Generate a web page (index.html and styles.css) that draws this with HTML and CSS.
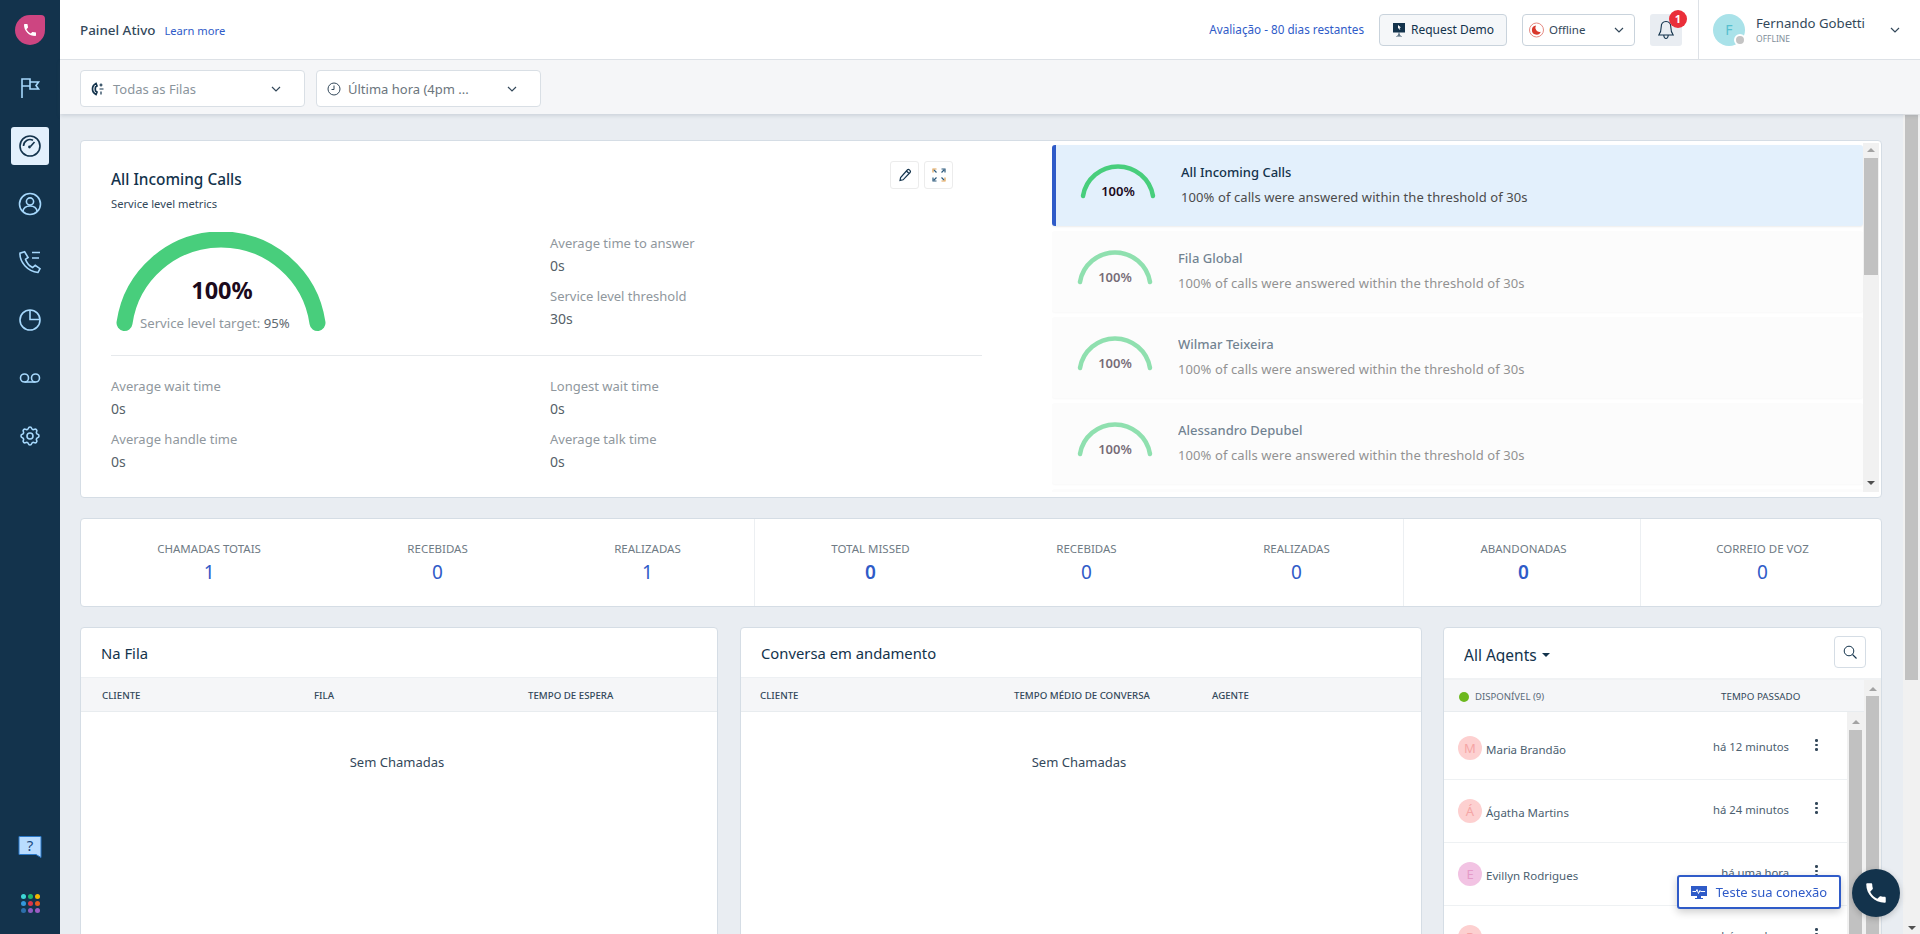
FILE: index.html
```html
<!DOCTYPE html>
<html lang="pt">
<head>
<meta charset="utf-8">
<title>Painel Ativo</title>
<link rel="stylesheet" href="styles.css">
</head>
<body>
<div class="app">
  <aside class="sidebar">
    <div class="logo">
      <svg width="16" height="16" viewBox="0 0 24 24"><path fill="#fff" d="M6.62 10.79c1.44 2.83 3.76 5.14 6.59 6.59l2.2-2.2c.27-.27.67-.36 1.02-.24 1.12.37 2.33.57 3.57.57.55 0 1 .45 1 1V20c0 .55-.45 1-1 1-9.39 0-17-7.61-17-17 0-.55.45-1 1-1h3.5c.55 0 1 .45 1 1 0 1.25.2 2.45.57 3.57.11.35.03.74-.25 1.02l-2.2 2.2z"/></svg>
    </div>
    <nav class="nav">
      <a class="nav-item"><svg class="nav-ico" width="24" height="24" viewBox="0 0 24 24"><path d="M4 22V3h8v3h8.500l-2.500 3.500 2.500 3.500H12v-3H4M12 6v4"/></svg></a>
      <a class="nav-item active"><svg class="nav-ico" width="24" height="24" viewBox="0 0 24 24"><circle cx="12" cy="12" r="10"/><path d="M5.500 12a6.500 6.500 0 0 1 9.500-5.700M16.500 8l-4 4.500"/><circle cx="11.500" cy="13" r="1.400" class="solid"/></svg></a>
      <a class="nav-item"><svg class="nav-ico" width="24" height="24" viewBox="0 0 24 24"><circle cx="12" cy="12" r="10.500"/><circle cx="12" cy="9.500" r="3.600"/><path d="M4.800 19.500c.6-3.500 3.300-5.500 7.200-5.500s6.600 2 7.200 5.500"/></svg></a>
      <a class="nav-item"><svg class="nav-ico" width="24" height="24" viewBox="0 0 24 24"><path d="M6.600 1.800 2 3.200C1.500 12 9.500 21.500 20 22.500l2-3.800-4.800-3.400-2.600 2.200C11 15.800 8.500 12.500 7.500 9.300l2.600-1.800zM14 2.500h8M14 8h7"/></svg></a>
      <a class="nav-item"><svg class="nav-ico" width="24" height="24" viewBox="0 0 24 24"><circle cx="12" cy="12" r="10"/><path d="M12 2v9.500h10"/></svg></a>
      <a class="nav-item"><svg class="nav-ico" width="24" height="24" viewBox="0 0 24 24"><circle cx="6.500" cy="12" r="4"/><circle cx="17.500" cy="12" r="4"/><path d="M6.500 16h11"/></svg></a>
      <a class="nav-item"><svg class="nav-ico" width="24" height="24" viewBox="0 0 24 24"><path d="M10.325 4.317c.426-1.756 2.924-1.756 3.350 0a1.724 1.724 0 002.573 1.066c1.543-.94 3.310.826 2.370 2.370a1.724 1.724 0 001.065 2.572c1.756.426 1.756 2.924 0 3.350a1.724 1.724 0 00-1.066 2.573c.94 1.543-.826 3.310-2.370 2.370a1.724 1.724 0 00-2.572 1.065c-.426 1.756-2.924 1.756-3.350 0a1.724 1.724 0 00-2.573-1.066c-1.543.94-3.310-.826-2.370-2.370a1.724 1.724 0 00-1.065-2.572c-1.756-.426-1.756-2.924 0-3.350a1.724 1.724 0 001.066-2.573c-.94-1.543.826-3.310 2.370-2.370.996.608 2.296.07 2.572-1.065z"/><circle cx="12" cy="12" r="3"/></svg></a>
    </nav>
    <div class="help">
      <svg width="24" height="22" viewBox="0 0 24 22"><path fill="#b9dcff" stroke="#2a78c8" stroke-width="1" d="M1 .5h22V21.500l-5-3H1z"/><text x="12" y="15" text-anchor="middle" class="help-q">?</text></svg>
    </div>
    <div class="dots">
      <i class="d1"></i><i class="d2"></i><i class="d3"></i><i class="d4"></i><i class="d5"></i><i class="d6"></i><i class="d7"></i><i class="d8"></i><i class="d9"></i>
    </div>
  </aside>

  <div class="main">
    <header class="topbar">
      <span class="page-title">Painel Ativo</span>
      <a class="learn">Learn more</a>
      <div class="top-right">
        <a class="trial">Avaliação - 80 dias restantes</a>
        <button class="demo-btn">
          <svg width="14" height="16" viewBox="0 0 14 16"><path fill="#13334c" d="M1 1h12v9.500H1z"/><path fill="#fff" d="m6 3 3 2.500-1.500.3.800 1.700-.8.300-.8-1.700L6 7z"/><path stroke="#13334c" stroke-width=".8" fill="none" d="M7 10.500V15M7 12.500 4.500 15M7 12.500 9.500 15"/></svg>
          Request Demo
        </button>
        <div class="status-sel">
          <svg width="15" height="16" viewBox="0 0 15 16"><circle cx="7.500" cy="8" r="7" fill="none" stroke="#e58a82" stroke-width="1"/><path fill="#d9382c" d="M7 3.500a4.600 4.600 0 1 0 4.800 6.200 4.200 4.200 0 0 1-4.800-6.200z"/></svg>
          <span>Offline</span>
          <svg class="chev" width="10" height="6" viewBox="0 0 10 6"><path d="m1 1 4 4 4-4"/></svg>
        </div>
        <div class="bell">
          <svg width="16" height="20" viewBox="0 0 16 20"><path fill="none" stroke="#13334c" stroke-width="1.100" d="M8 1.500c-3.300 0-4.800 2.400-4.800 5.500 0 3.500-.8 6-2.400 8h14.400c-1.600-2-2.400-4.500-2.400-8 0-3.100-1.500-5.500-4.800-5.500zM5.800 15.500c.2 2 1.100 3 2.200 3s2-1 2.200-3"/></svg>
          <span class="badge">1</span>
        </div>
        <div class="user">
          <div class="user-av">F<i class="user-dot"></i></div>
          <div class="user-txt">
            <div class="user-name">Fernando Gobetti</div>
            <div class="user-st">OFFLINE</div>
          </div>
          <svg class="chev" width="10" height="6" viewBox="0 0 10 6"><path d="m1 1 4 4 4-4"/></svg>
        </div>
      </div>
    </header>

    <div class="filters">
      <div class="filter">
        <svg width="14" height="14" viewBox="0 0 14 14"><path fill="none" stroke="#13334c" stroke-width="1.700" d="M5 1.500C2 3 1.500 5 1.500 7s.5 4 3.500 5.500l1-2.500-1.500-1c-.3-1.300-.3-2.700 0-4L6 4z"/><path fill="none" stroke="#13334c" stroke-width="1.200" d="M10 1.500v3M8.500 3h3M8.500 7h4M10 9.500v3"/></svg>
        <span class="filter-txt">Todas as Filas</span>
        <svg class="chev" width="10" height="6" viewBox="0 0 10 6"><path d="m1 1 4 4 4-4"/></svg>
      </div>
      <div class="filter">
        <svg width="14" height="14" viewBox="0 0 14 14"><circle cx="7" cy="7" r="6" fill="none" stroke="#33485a" stroke-width="1"/><path fill="none" stroke="#33485a" stroke-width="1" d="M7 3.500V7.500H4.500"/></svg>
        <span class="filter-txt strong">Última hora (4pm ...</span>
        <svg class="chev" width="10" height="6" viewBox="0 0 10 6"><path d="m1 1 4 4 4-4"/></svg>
      </div>
    </div>

    <div class="body">
      <div class="content">
        <section class="card sl-card">
          <div class="sl-left">
            <div class="sl-head">
              <div>
                <h1 class="sl-title">All Incoming Calls</h1>
                <div class="sl-sub">Service level metrics</div>
              </div>
              <div class="sl-tools">
                <button class="tool"><svg width="14" height="14" viewBox="0 0 14 14"><path fill="#f3f8ff" stroke="#13334c" stroke-width="1.200" d="M2 12.500l.6-3L9.500 1.800c.6-.5 1.300-.4 1.900.1l.7.7c.5.6.5 1.300 0 1.900l-7 7.300zM8.500 3l2.500 2.500"/></svg></button>
                <button class="tool"><svg width="14" height="14" viewBox="0 0 14 14"><path fill="none" stroke="#e0a050" stroke-width="1.200" d="M1 4.500V1h3.500M13 9.500V13H9.500"/><path fill="none" stroke="#2d5a7c" stroke-width="1.200" d="M9.500 1H13v3.500M4.500 13H1V9.500M2 2l2.500 2.500M12 2 9.500 4.500M2 12l2.500-2.500M12 12 9.500 9.500"/></svg></button>
              </div>
            </div>
            <div class="sl-gauge-row">
              <div class="big-gauge">
                <svg width="210" height="100" viewBox="0 0 210 100"><path d="M8.500 91A97.500 97.500 0 0 1 201.500 91" fill="none" stroke="#48ce7c" stroke-width="16" stroke-linecap="round"/></svg>
                <span class="big-val">100%</span>
                <span class="big-target">Service level target: <b>95%</b></span>
              </div>
              <div class="metrics-col">
                <div class="metric"><div class="m-label">Average time to answer</div><div class="m-val">0s</div></div>
                <div class="metric"><div class="m-label">Service level threshold</div><div class="m-val">30s</div></div>
              </div>
            </div>
            <hr class="sl-hr">
            <div class="metrics-grid">
              <div class="metric"><div class="m-label">Average wait time</div><div class="m-val">0s</div></div>
              <div class="metric"><div class="m-label">Longest wait time</div><div class="m-val">0s</div></div>
              <div class="metric"><div class="m-label">Average handle time</div><div class="m-val">0s</div></div>
              <div class="metric"><div class="m-label">Average talk time</div><div class="m-val">0s</div></div>
            </div>
          </div>
          <div class="sl-right">
            <div class="sl-list">
              <div class="sl-row selected">
                <div class="mini-gauge"><svg width="76" height="36" viewBox="0 0 76 36"><path d="M3 33A35.500 35.500 0 0 1 73 33" fill="none" stroke="#48ce7c" stroke-width="4.500" stroke-linecap="round"/></svg><span class="mini-val">100%</span></div>
                <div class="sl-row-txt"><div class="sl-row-title">All Incoming Calls</div><div class="sl-row-sub">100% of calls were answered within the threshold of 30s</div></div>
              </div>
              <div class="sl-row">
                <div class="mini-gauge"><svg width="76" height="36" viewBox="0 0 76 36"><path d="M3 33A35.500 35.500 0 0 1 73 33" fill="none" stroke="#48ce7c" stroke-width="4.500" stroke-linecap="round"/></svg><span class="mini-val">100%</span></div>
                <div class="sl-row-txt"><div class="sl-row-title">Fila Global</div><div class="sl-row-sub">100% of calls were answered within the threshold of 30s</div></div>
              </div>
              <div class="sl-row">
                <div class="mini-gauge"><svg width="76" height="36" viewBox="0 0 76 36"><path d="M3 33A35.500 35.500 0 0 1 73 33" fill="none" stroke="#48ce7c" stroke-width="4.500" stroke-linecap="round"/></svg><span class="mini-val">100%</span></div>
                <div class="sl-row-txt"><div class="sl-row-title">Wilmar Teixeira</div><div class="sl-row-sub">100% of calls were answered within the threshold of 30s</div></div>
              </div>
              <div class="sl-row">
                <div class="mini-gauge"><svg width="76" height="36" viewBox="0 0 76 36"><path d="M3 33A35.500 35.500 0 0 1 73 33" fill="none" stroke="#48ce7c" stroke-width="4.500" stroke-linecap="round"/></svg><span class="mini-val">100%</span></div>
                <div class="sl-row-txt"><div class="sl-row-title">Alessandro Depubel</div><div class="sl-row-sub">100% of calls were answered within the threshold of 30s</div></div>
              </div>
              <div class="sl-row"></div>
            </div>
            <div class="sb sb-list"><i class="up"></i><i class="thumb"></i><i class="down"></i></div>
          </div>
        </section>

        <section class="card stats">
          <div class="st-group">
            <div class="stat"><div class="st-label">CHAMADAS TOTAIS</div><div class="st-val">1</div></div>
            <div class="stat"><div class="st-label">RECEBIDAS</div><div class="st-val">0</div></div>
            <div class="stat"><div class="st-label">REALIZADAS</div><div class="st-val">1</div></div>
          </div>
          <div class="st-group g2">
            <div class="stat"><div class="st-label">TOTAL MISSED</div><div class="st-val heavy">0</div></div>
            <div class="stat"><div class="st-label">RECEBIDAS</div><div class="st-val">0</div></div>
            <div class="stat"><div class="st-label">REALIZADAS</div><div class="st-val">0</div></div>
          </div>
          <div class="st-group g3">
            <div class="stat"><div class="st-label">ABANDONADAS</div><div class="st-val heavy">0</div></div>
          </div>
          <div class="st-group g4">
            <div class="stat"><div class="st-label">CORREIO DE VOZ</div><div class="st-val">0</div></div>
          </div>
        </section>

        <div class="panels">
          <section class="card panel p-queue">
            <h2 class="p-title">Na Fila</h2>
            <div class="p-cols cols-queue"><span>CLIENTE</span><span>FILA</span><span>TEMPO DE ESPERA</span></div>
            <div class="p-empty">Sem Chamadas</div>
          </section>
          <section class="card panel p-talk">
            <h2 class="p-title">Conversa em andamento</h2>
            <div class="p-cols cols-talk"><span>CLIENTE</span><span>TEMPO MÉDIO DE CONVERSA</span><span>AGENTE</span></div>
            <div class="p-empty">Sem Chamadas</div>
          </section>
          <section class="card panel p-agents">
            <div class="ag-head">
              <span class="ag-title">All Agents<i class="caret"></i></span>
              <button class="ag-search"><svg width="14" height="14" viewBox="0 0 14 14"><circle cx="6" cy="6" r="4.800" fill="none" stroke="#13334c" stroke-width="1"/><path stroke="#13334c" stroke-width="1.100" d="m9.500 9.500 4 4"/></svg></button>
            </div>
            <div class="ag-body">
              <div class="ag-main">
                <div class="ag-cols"><span class="ag-avail"><i class="green"></i>DISPONÍVEL (9)</span><span class="ag-past">TEMPO PASSADO</span></div>
                <div class="ag-scroll">
                  <div class="ag-list">
                    <div class="ag-row first"><span class="av pink">M</span><span class="ag-name">Maria Brandão</span><span class="ag-time">há 12 minutos</span><span class="kebab"><i></i><i></i><i></i></span></div>
                    <div class="ag-row"><span class="av pink">Á</span><span class="ag-name">Ágatha Martins</span><span class="ag-time">há 24 minutos</span><span class="kebab"><i></i><i></i><i></i></span></div>
                    <div class="ag-row"><span class="av lilac">E</span><span class="ag-name">Evillyn Rodrigues</span><span class="ag-time">há uma hora</span><span class="kebab"><i></i><i></i><i></i></span></div>
                    <div class="ag-row"><span class="av pink">R</span><span class="ag-name">Rafael Carlos Trindade</span><span class="ag-time">há uma hora</span><span class="kebab"><i></i><i></i><i></i></span></div>
                  </div>
                  <div class="sb sb-inner"><i class="up"></i><i class="thumb"></i></div>
                </div>
              </div>
              <div class="sb sb-outer"><i class="up"></i><i class="thumb"></i></div>
            </div>
          </section>
        </div>
      </div>
      <div class="sb sb-page"><i class="thumb"></i><i class="down"></i></div>
    </div>
  </div>
</div>

<button class="conn-test">
  <svg width="16" height="13" viewBox="0 0 16 13"><path fill="#2f5bc8" d="M0 0h16v10H0zM6 10h4v2h2v1H4v-1h2z"/><path fill="none" stroke="#fff" stroke-width="1" d="M1.500 5.500h3.500l1-2 1.500 4 1.500-3 .6 1h4.500"/></svg>
  Teste sua conexão
</button>
<button class="fab"><svg width="26" height="26" viewBox="0 0 24 24"><path fill="#fff" d="M6.620 10.790c1.440 2.830 3.760 5.140 6.590 6.590l2.200-2.200c.27-.27.67-.36 1.020-.24 1.120.37 2.330.57 3.570.57.55 0 1 .45 1 1V20c0 .55-.45 1-1 1-9.390 0-17-7.610-17-17 0-.55.45-1 1-1h3.500c.55 0 1 .45 1 1 0 1.250.2 2.450.57 3.570.11.35.03.74-.25 1.020l-2.200 2.200z"/></svg></button>
</body>
</html>
```
FILE: styles.css
```css
* { box-sizing: border-box; }
html, body { margin: 0; padding: 0; height: 100%; overflow: hidden; }
body { font-family: "Noto Sans", "Open Sans", sans-serif; color: #13334c; font-size: 13px; }
button { font-family: inherit; }
.app { display: flex; height: 934px; }

.sidebar { width: 60px; flex: none; background: #13334c; display: flex; flex-direction: column; align-items: center; }
.logo { width: 30px; height: 30px; margin-top: 15px; background: #cd4581; border-radius: 50% 4px 50% 50%; display: flex; align-items: center; justify-content: center; }
.nav { display: flex; flex-direction: column; gap: 20px; margin-top: 24px; }
.nav-item { width: 38px; height: 38px; border-radius: 3px; display: flex; align-items: center; justify-content: center; }
.nav-item.active { background: #e3f0fc; }
.nav-ico { fill: none; stroke: #a6d8fc; stroke-width: 1.600; }
.active .nav-ico { stroke: #13334c; }
.nav-ico .solid { fill: #13334c; stroke: none; }
.help { margin-top: auto; height: 22px; }
.help-q { font-family: "Noto Sans", sans-serif; font-size: 15px; fill: #1d4a80; }
.dots { display: grid; grid-template-columns: repeat(3, 5px); gap: 2px; margin: 36px 0 21px; }
.dots i { width: 5px; height: 5px; border-radius: 50%; }
.d1 { background: #3fd6d6; } .d2 { background: #1fb870; } .d3 { background: #f5b800; }
.d4 { background: #3498db; } .d5 { background: #d9364a; } .d6 { background: #e55a1f; }
.d7 { background: #2c6fab; } .d8 { background: #8e5cc0; } .d9 { background: #9d5cc4; }

.main { flex: 1; min-width: 0; display: flex; flex-direction: column; background: #e9edf2; }
.topbar { height: 60px; flex: none; background: #fff; display: flex; align-items: center; padding-left: 20px; border-bottom: 1px solid #dde1e6; position: relative; z-index: 2; }
.page-title { font-size: 13.400px; font-weight: 500; color: #33485a; }
.learn { font-size: 11.200px; color: #2f5bc8; margin-left: 9px; margin-top: 1px; }
.top-right { margin-left: auto; display: flex; align-items: center; height: 100%; }
.trial { font-size: 11.700px; color: #2f5bc8; margin-right: 15px; margin-bottom: 2px; }
.demo-btn { width: 128px; height: 32px; background: #f5f7f9; border: 1px solid #c9d3dc; border-radius: 4px; display: flex; align-items: center; justify-content: center; gap: 5px; font-size: 12px; color: #13334c; padding: 0; }
.status-sel { width: 113px; height: 32px; margin-left: 15px; background: #fff; border: 1px solid #c9d3dc; border-radius: 4px; display: flex; align-items: center; padding: 0 10px 0 6px; font-size: 11.500px; color: #33485a; gap: 5px; }
.status-sel .chev { margin-left: auto; }
.chev { flex: none; fill: none; stroke: #33485a; stroke-width: 1.200; }
.bell { width: 32px; height: 32px; margin-left: 15px; background: #e9edf2; border-radius: 3px; display: flex; align-items: center; justify-content: center; position: relative; }
.badge { position: absolute; top: -4px; left: 19px; width: 18px; height: 18px; border-radius: 50%; background: #ea2f3a; color: #fff; font-size: 11px; font-weight: 700; display: flex; align-items: center; justify-content: center; }
.user { height: 100%; width: 222px; margin-left: 16px; border-left: 1px solid #dde1e6; display: flex; align-items: center; padding: 0 20px 0 14px; }
.user > .chev { margin-left: auto; }
.user-av { width: 32px; height: 32px; border-radius: 50%; background: #a9e2e9; color: #55bfcf; font-size: 14px; display: flex; align-items: center; justify-content: center; position: relative; flex: none; }
.user-dot { position: absolute; right: -1px; bottom: 0; width: 12px; height: 12px; border-radius: 50%; background: #c4c4c4; border: 2px solid #fff; }
.user-txt { margin-left: 11px; }
.user-name { font-size: 13.200px; color: #33485a; line-height: 16px; margin-bottom: 2px; }
.user-st { font-size: 8.500px; color: #7f8d99; line-height: 12px; }

.filters { height: 54px; flex: none; background: #f5f6f8; display: flex; gap: 11px; padding: 10px 20px 0; box-shadow: 0 2px 4px rgba(60, 80, 100, .16); position: relative; z-index: 1; }
.filter { width: 225px; height: 37px; background: #fff; border: 1px solid #d9dfe5; border-radius: 4px; display: flex; align-items: center; padding: 0 23px 0 10px; color: #8a949c; font-size: 13px; }
.filter .chev { margin-left: auto; }
.filter-txt { margin-left: 8px; white-space: nowrap; }
.filter-txt.strong { color: #6b757d; margin-left: 7px; }

.body { flex: 1; min-height: 0; display: flex; }
.content { flex: 1; min-width: 0; overflow: hidden; padding: 26px 21px 0 20px; display: flex; flex-direction: column; gap: 20px; }
.card { background: #fff; border: 1px solid #d5dde5; border-radius: 4px; flex: none; }

.sb { background: #f1f1f1; flex: none; display: flex; flex-direction: column; align-items: center; }
.sb .thumb { display: block; background: #c1c1c1; }
.sb .up, .sb .down { display: block; width: 0; height: 0; border-left: 4px solid transparent; border-right: 4px solid transparent; }
.sb .up { border-bottom: 4px solid #a3a3a3; }
.sb .down { border-top: 4px solid #505050; margin-top: auto; }
.sb-page { width: 17px; padding: 1px 0 4px; }
.sb-page .thumb { width: 13px; height: 565px; }
.sb-list { width: 16px; padding: 5px 0 7px; }
.sb-list .thumb { width: 14px; height: 117px; margin-top: 6px; }
.sb-list .down { border-top-color: #505050; }

.sl-card { height: 358px; display: flex; }
.sl-left { width: 971px; flex: none; padding: 28px 70px 0 30px; }
.sl-head { display: flex; justify-content: space-between; align-items: flex-start; }
.sl-title { margin: 0; font-size: 15.400px; line-height: 22px; font-weight: 500; color: #13334c; }
.sl-sub { font-size: 11.200px; line-height: 16px; margin-top: 5px; color: #33485a; }
.sl-tools { display: flex; gap: 5px; margin: -8px 29px 0 0; }
.tool { width: 29px; height: 28px; padding: 0; background: #fff; border: 1px solid #ececec; border-radius: 3px; display: flex; align-items: center; justify-content: center; }
.sl-gauge-row { display: flex; margin-top: 20px; }
.big-gauge { width: 210px; height: 100px; margin-left: 5px; position: relative; }
.big-gauge svg { display: block; }
.big-val { position: absolute; left: 0; right: 0; top: 43px; text-align: center; font-size: 23.500px; line-height: 30px; font-weight: 700; color: #1c0a1c; margin-left: 2px; }
.big-target { position: absolute; left: 24px; top: 81px; font-size: 13.200px; line-height: 20px; color: #8f979d; white-space: nowrap; }
.big-target b { font-weight: 400; color: #5f6a72; }
.metrics-col { margin-left: 224px; padding-top: 1px; display: flex; flex-direction: column; gap: 10px; }
.metric { height: 43px; }
.m-label { font-size: 13px; line-height: 20px; color: #8f979d; }
.m-val { font-size: 14px; line-height: 20px; margin-top: 3px; color: #556068; }
.sl-hr { border: 0; border-top: 1px solid #e6e9ec; margin: 23px 0 20px; }
.metrics-grid { display: grid; grid-template-columns: 439px 1fr; row-gap: 10px; }

.sl-right { flex: 1; min-width: 0; display: flex; margin: 2px 2px 5px 0; height: 349px; }
.sl-list { flex: 1; min-width: 0; overflow: hidden; padding-top: 2px; display: flex; flex-direction: column; gap: 5px; }
.sl-row { height: 81px; flex: none; display: flex; align-items: flex-start; padding: 18px 0 0 25px; background: #fcfcfc; border-radius: 3px; box-shadow: 0 1px 2px rgba(0,0,0,.03); }
.sl-row.selected { background: #e3f0fc; border-left: 4px solid #2f5bc8; padding-left: 24px; box-shadow: 0 1px 2px rgba(0,0,0,.08); }
.mini-gauge { width: 76px; height: 36px; position: relative; opacity: .6; flex: none; }
.mini-gauge svg { display: block; }
.selected .mini-gauge { opacity: 1; }
.mini-val { position: absolute; left: 0; right: 0; top: 19px; text-align: center; font-size: 13px; line-height: 18px; font-weight: 600; color: #1c0a1c; }
.sl-row-txt { margin-left: 25px; opacity: .6; }
.selected .sl-row-txt { opacity: 1; }
.sl-row-title { font-size: 13px; line-height: 18px; font-weight: 500; color: #13334c; }
.sl-row-sub { font-size: 13px; letter-spacing: .09px; line-height: 18px; margin-top: 7px; color: #4b4b4b; white-space: nowrap; }

.stats { height: 89px; display: flex; }
.st-group { display: flex; justify-content: space-around; height: 100%; padding: 21px 0 0 3px; border-right: 1px solid #eceff2; }
.st-group:nth-child(1) { width: 674px; }
.st-group.g2 { width: 649px; }
.st-group.g3 { width: 237px; }
.st-group.g4 { flex: 1; border-right: 0; }
.stat { text-align: center; }
.st-label { font-size: 11.500px; line-height: 18px; color: #6f7b85; white-space: nowrap; }
.st-val { font-size: 19px; line-height: 26px; margin-top: 1px; color: #2f5bc8; }
.st-val.heavy { font-weight: 600; }

.panels { display: flex; gap: 21px; flex: none; align-items: flex-start; }
.panel { height: 420px; }
.p-queue { width: 638px; }
.p-talk { width: 682px; margin-left: 1px; }
.p-agents { width: 439px; }
.p-title { margin: 0; height: 50px; padding: 0 20px; font-size: 14.800px; font-weight: 400; line-height: 50px; color: #13334c; border-bottom: 1px solid #edf0f3; }
.p-cols { height: 34px; background: #f5f6f8; border-bottom: 1px solid #e8ecef; display: grid; align-items: center; padding-top: 2px; font-size: 9.700px; font-weight: 500; color: #33485a; }
.cols-queue { grid-template-columns: 212px 214px 1fr; padding-left: 21px; }
.cols-talk { grid-template-columns: 254px 198px 1fr; padding-left: 19px; }
.p-empty { text-align: center; font-size: 13px; line-height: 18px; margin-top: 41px; padding-right: 4px; color: #33485a; }

.ag-head { height: 52px; border-bottom: 2px solid #f0f2f4; display: flex; align-items: center; justify-content: space-between; padding: 0 15px 0 20px; }
.ag-title { display: block; height: 18px; line-height: 20px; overflow: hidden; margin-top: 2px; font-size: 15.500px; color: #13334c; }
.caret { display: inline-block; width: 0; height: 0; margin-left: 5px; vertical-align: 4px; border-left: 4px solid transparent; border-right: 4px solid transparent; border-top: 4px solid #13334c; }
.ag-search { width: 32px; height: 32px; padding: 0; background: #fff; border: 1px solid #d5dde5; border-radius: 4px; display: flex; align-items: center; justify-content: center; margin-top: -2px; }
.ag-body { display: flex; height: 366px; }
.ag-main { flex: 1; min-width: 0; }
.ag-cols { height: 32px; background: #f5f6f8; border-bottom: 1px solid #e8ecef; display: flex; align-items: center; padding: 2px 0 0 15px; font-size: 9.800px; color: #33485a; }
.ag-avail { display: flex; align-items: center; gap: 6px; font-size: 9.600px; color: #5a6a78; width: 262px; }
.green { width: 10px; height: 10px; border-radius: 50%; background: #6cb81e; }
.ag-scroll { display: flex; height: 334px; }
.ag-list { flex: 1; min-width: 0; }
.ag-row { height: 63px; border-bottom: 1px solid #eef1f3; display: flex; align-items: flex-start; padding: 19px 0 0 14px; }
.ag-row.first { height: 68px; padding-top: 24px; }
.av { width: 24px; height: 24px; border-radius: 50%; display: flex; align-items: center; justify-content: center; font-size: 13px; flex: none; }
.av.pink { background: #fdd0d0; color: #f5a5a5; }
.av.lilac { background: #f2c3e3; color: #e59ac8; }
.ag-name { margin-left: 4px; font-size: 11.500px; line-height: 28px; color: #4b6070; width: 227px; white-space: nowrap; }
.ag-time { font-size: 11.300px; line-height: 20px; margin-top: 1px; width: 76px; text-align: right; white-space: nowrap; color: #4b6070; }
.kebab { display: flex; flex-direction: column; gap: 2px; margin-left: 26px; padding-top: 3px; }
.kebab i { width: 2.500px; height: 2.500px; background: #33485a; border-radius: 50%; }
.sb-inner { width: 17px; padding-top: 8px; }
.sb-inner .thumb { width: 13px; flex: 1; margin-top: 6px; }
.sb-outer { width: 17px; padding-top: 7px; }
.sb-outer .thumb { width: 13px; flex: 1; margin-top: 5px; }

.conn-test { position: fixed; left: 1677px; top: 875px; width: 164px; height: 34px; background: #fff; border: 2px solid #2f5bc8; border-radius: 3px; color: #2f5bc8; font-size: 13px; display: flex; align-items: center; justify-content: center; gap: 9px; padding: 0; box-shadow: 0 3px 8px rgba(0,0,0,.2); }
.fab { position: fixed; left: 1852px; top: 869px; width: 48px; height: 48px; padding: 0; border: 0; border-radius: 50%; background: #13334c; display: flex; align-items: center; justify-content: center; box-shadow: 0 2px 6px rgba(0,0,0,.2); }
```
